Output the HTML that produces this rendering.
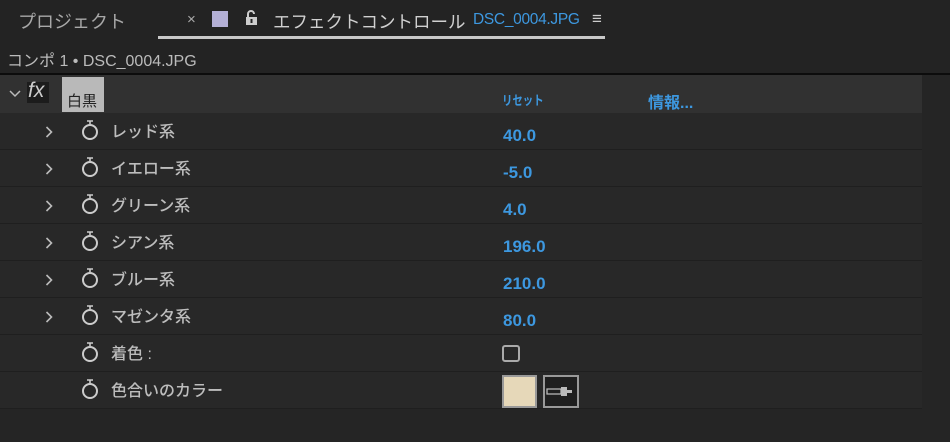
<!DOCTYPE html><html><head><meta charset="utf-8"><style>
*{margin:0;padding:0;box-sizing:border-box}
body{width:950px;height:442px;background:#232323;font-family:"Liberation Sans","Noto Sans CJK JP",sans-serif;color:#c0c0c0;position:relative;overflow:hidden}
.a{position:absolute;white-space:nowrap}
.blue{color:#3d98e0}
.row{position:absolute;left:0;width:922px;height:37px;background:#282828;border-bottom:1px solid #1f1f1f}
.lbl{position:absolute;left:111px;font-size:16px;color:#bdbdbd;font-weight:500}
.val{position:absolute;left:503px;font-size:17px;font-weight:bold;color:#3d98e0}
</style></head><body>
<div class="a" style="left:0;top:75px;width:950px;height:367px;background:#252525"></div>
<div class="a" style="left:18px;top:8px;font-size:18px;color:#a8a8a8">プロジェクト</div>
<div class="a" style="left:187px;top:11px;font-size:15px;color:#aaa">×</div>
<div class="a" style="left:212px;top:11px;width:16px;height:16px;background:#b4b0d6"></div>
<svg class="a" style="left:245px;top:9px" width="14" height="17" viewBox="0 0 14 17"><path d="M3 8V5a3 3 0 0 1 6 0" stroke="#ccc" stroke-width="2" fill="none"/><rect x="1" y="8" width="11" height="8" fill="#ccc"/><rect x="5.5" y="10" width="2" height="4" fill="#232323"/></svg>
<div class="a" style="left:273px;top:9px;font-size:17.5px;color:#d0d0d0">エフェクトコントロール</div>
<div class="a blue" style="left:473px;top:11px;font-size:15.5px;letter-spacing:-.3px">DSC_0004.JPG</div>
<div class="a" style="left:592px;top:9px;font-size:17px;color:#ccc">≡</div>
<div class="a" style="left:158px;top:36px;width:447px;height:3px;background:#c8c8c8"></div>
<div class="a" style="left:7px;top:47px;font-size:16px;color:#bbb">コンポ 1 • DSC_0004.JPG</div>
<div class="a" style="left:0;top:73px;width:950px;height:2px;background:#0c0c0c"></div>
<div class="a" style="left:0;top:75px;width:922px;height:38px;background:#313131"></div>
<svg class="a" style="left:9px;top:90px" width="12" height="8"><path d="M1 1l5 5 5-5" stroke="#bbb" stroke-width="1.5" fill="none"/></svg>
<div class="a" style="left:27px;top:82px;width:22px;height:21px;background:#1c1c1c"></div>
<div class="a" style="left:28px;top:79px;font-size:21px;font-style:italic;color:#ccc">fx</div>
<div class="a" style="left:62px;top:77px;width:42px;height:35px;background:#b9b9b9"></div>
<div class="a" style="left:67px;top:90px;font-size:15px;color:#222">白黒</div>
<div class="a blue" style="left:502px;top:90px;font-size:13px;font-weight:bold;transform:scaleX(.8);transform-origin:left">リセット</div>
<div class="a blue" style="left:648px;top:89px;font-size:16px;font-weight:bold">情報...</div>
<div id="rows"></div>
<script>
var d=[["レッド系","40.0"],["イエロー系","-5.0"],["グリーン系","4.0"],["シアン系","196.0"],["ブルー系","210.0"],["マゼンタ系","80.0"],["着色 :",""],["色合いのカラー",""]];
var h="";
d.forEach(function(r,i){var t=113+i*37;
h+='<div class="row" style="top:'+t+'px"></div>';
if(i<6)h+='<svg class="a" style="left:45px;top:'+(t+13)+'px" width="8" height="12"><path d="M1.5 1l5 5-5 5" stroke="#bbb" stroke-width="1.6" fill="none"/></svg>';
h+='<svg class="a" style="left:80px;top:'+(t+6)+'px" width="20" height="22" viewBox="0 0 20 22"><path d="M7 2h6M10 2v3" stroke="#ccc" stroke-width="1.6"/><circle cx="10" cy="13" r="7" stroke="#ccc" stroke-width="2" fill="none"/></svg>';
h+='<div class="lbl" style="top:'+(t+5)+'px">'+r[0]+'</div>';
if(r[1])h+='<div class="val" style="top:'+(t+13)+'px">'+r[1]+'</div>';
});
h+='<div class="a" style="left:502px;top:345px;width:18px;height:17px;border:2px solid #aaa;border-radius:3px"></div>';
h+='<div class="a" style="left:502px;top:375px;width:35px;height:33px;border:2px solid #999;background:#e6d8b9"></div>';
h+='<div class="a" style="left:543px;top:375px;width:36px;height:33px;border:2px solid #999;background:#1f1f1f"></div>';
h+='<svg class="a" style="left:545px;top:382px" width="32" height="20"><path d="M2 12h14v-5h-14z" fill="none" stroke="#bbb" stroke-width="1.3"/><rect x="16" y="5" width="6" height="9" fill="#bbb"/><rect x="22" y="8" width="5" height="3" fill="#bbb"/></svg>';
document.getElementById("rows").innerHTML=h;
</script>
</body></html>
